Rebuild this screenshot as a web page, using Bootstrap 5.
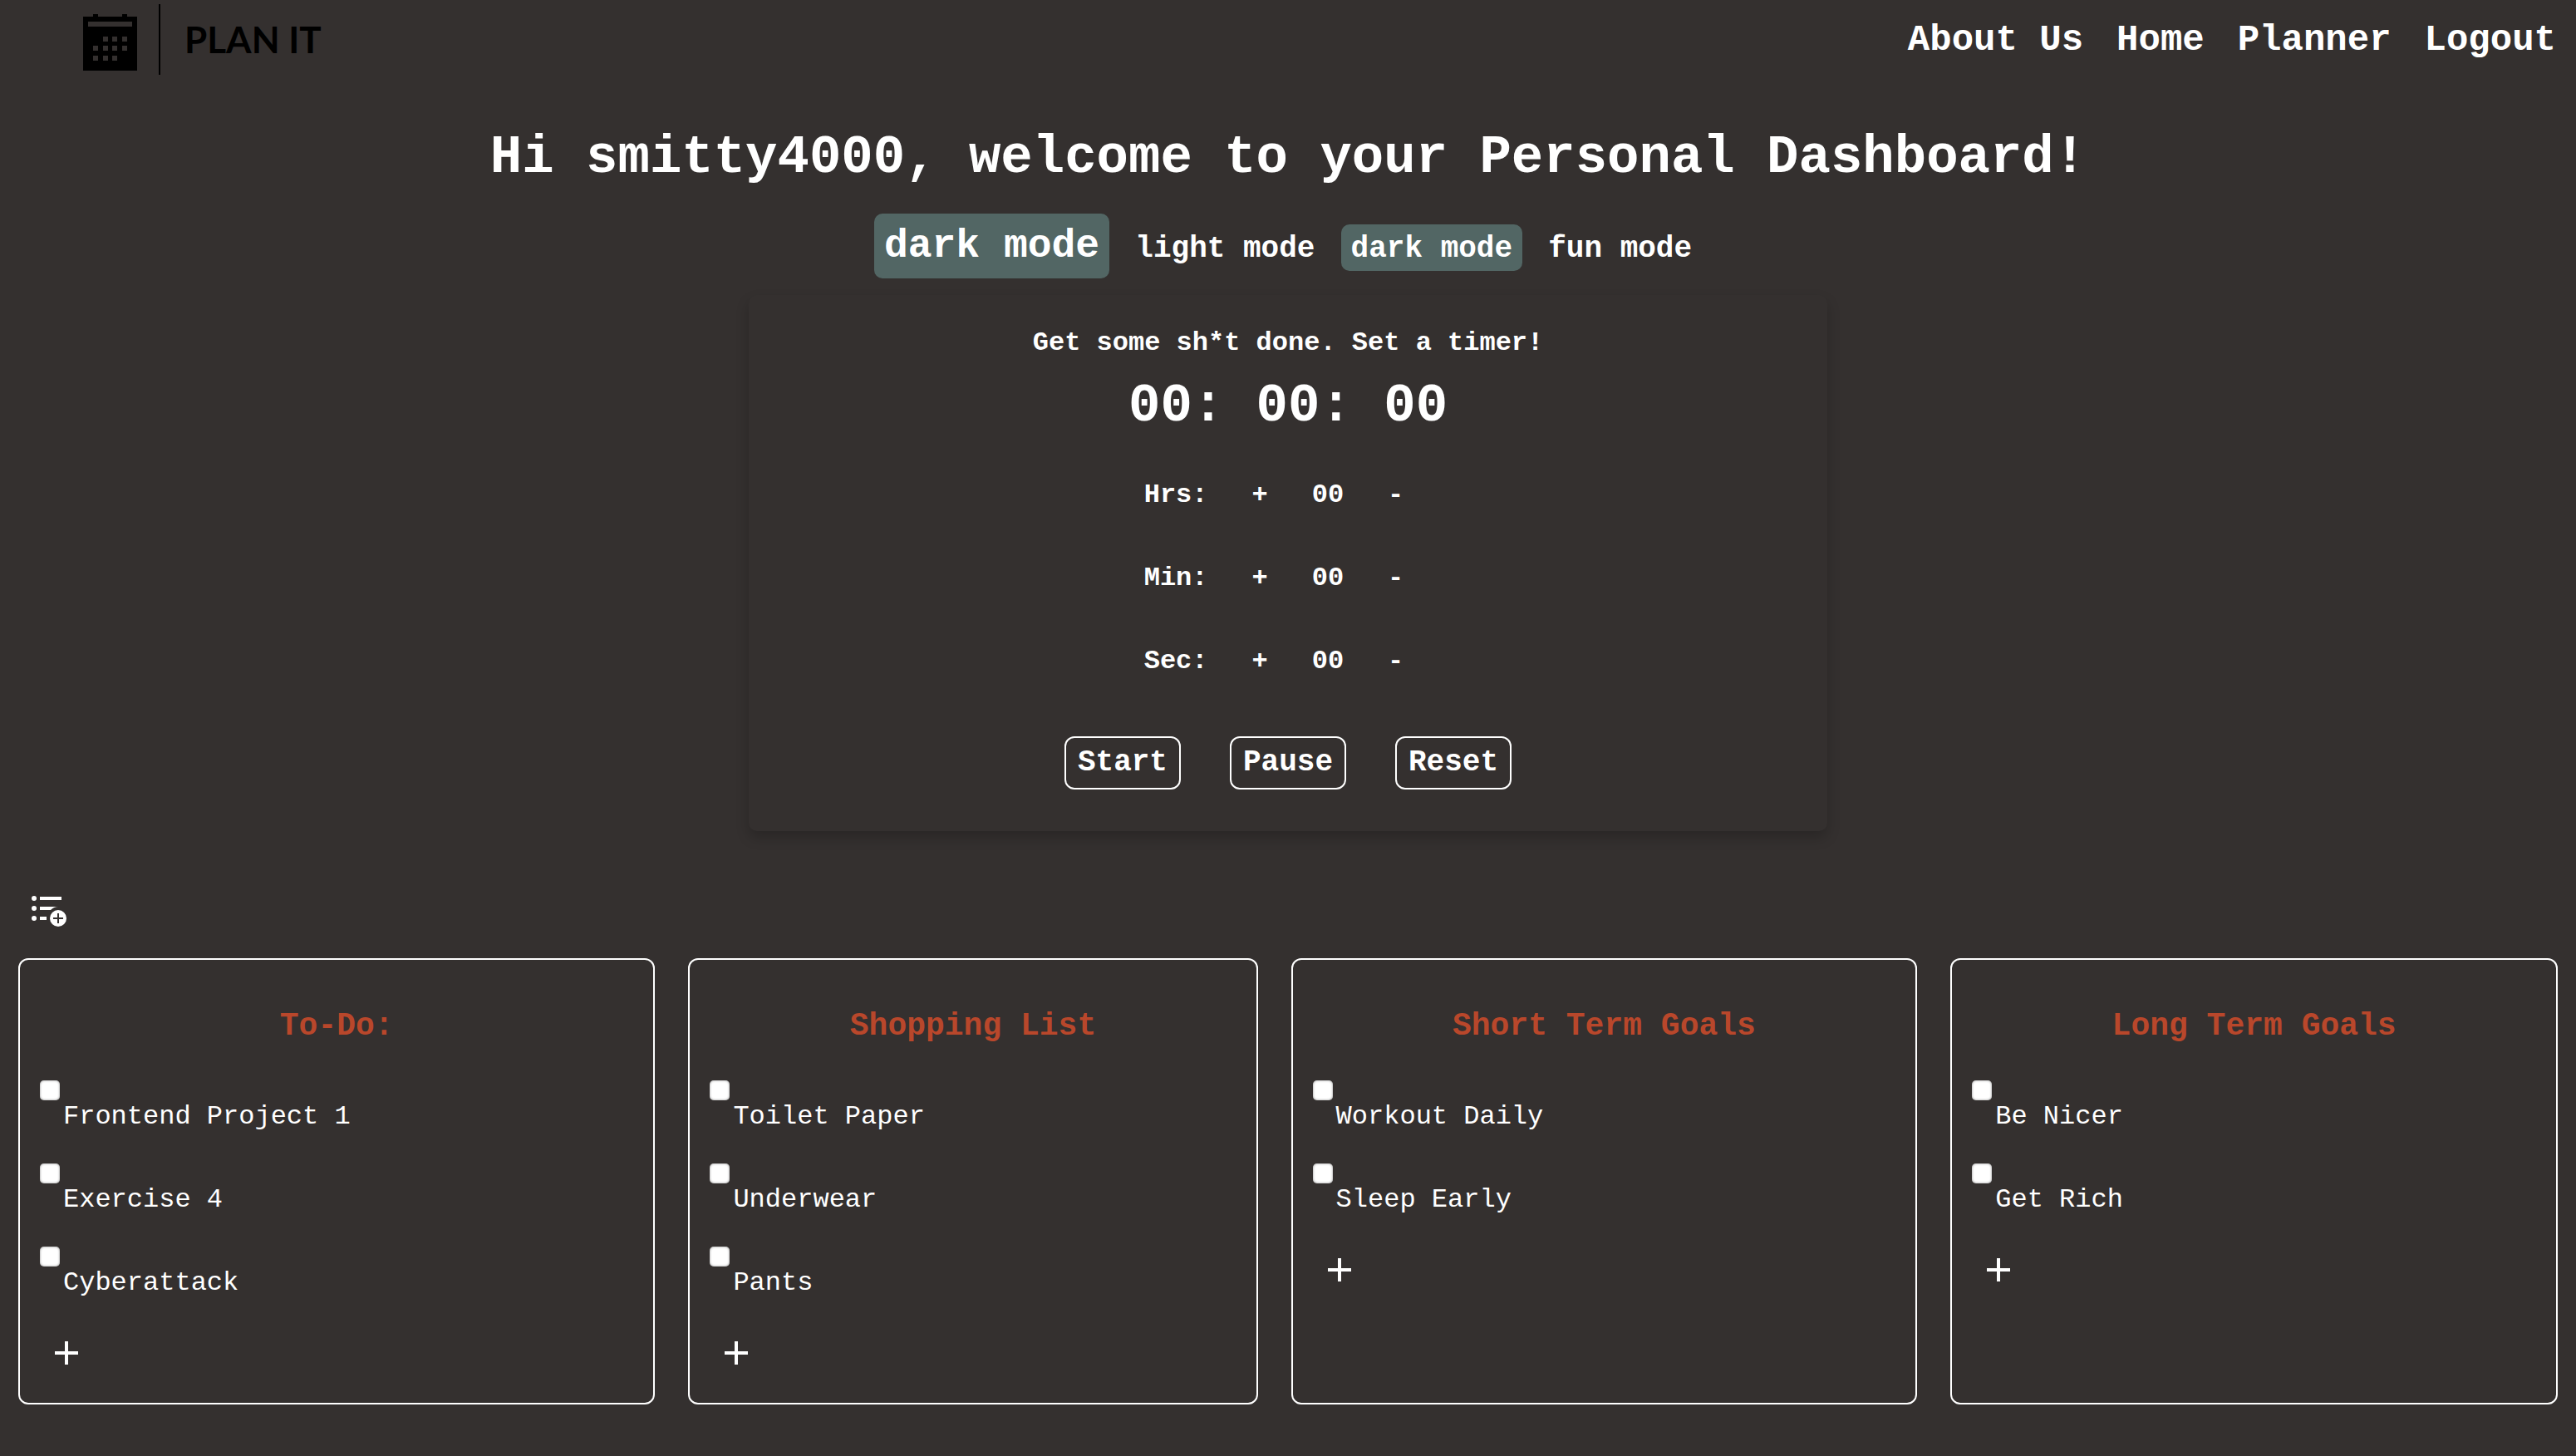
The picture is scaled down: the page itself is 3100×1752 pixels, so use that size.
<!DOCTYPE html>
<html lang="en">
<head>
<meta charset="utf-8">
<meta name="viewport" content="width=device-width, initial-scale=1">
<title>Plan It – Personal Dashboard</title>
<link rel="stylesheet" href="https://cdn.jsdelivr.net/npm/bootstrap@5.3.0/dist/css/bootstrap.min.css">
<style>
  body { background: #34302f; color: #fff; font-family: "Courier New", "Liberation Mono", monospace; font-size: 32px; line-height: 36px; }
  .site-nav { height: 110px; padding: 0 24px 0 100px; }
  .logo-art { width: 290px; height: 90px; }
  .logo-word { font-family: Lato, sans-serif; font-size: 44px; font-weight: 700; }
  .site-links { gap: 40px; font-size: 44px; line-height: 50px; padding-top: 23px; }
  .site-links a { color: #fff; text-decoration: none; }
  .greeting { font-size: 64px; line-height: 72px; margin: 44px 0 31px; }
  .mode-btn { background: none; border: 0; border-radius: 10px; color: #fff; font-size: 36px; line-height: 40px; font-weight: 700; padding: 10px 12px 6px; }
  .mode-now { display: inline-block; border-radius: 10px; font-size: 48px; line-height: 54px; padding: 12px; }
  .mode-now, .mode-btn.active { background: #526664; }
  .timer-card { width: 1298px; max-width: 100%; margin-top: 20px; padding: 40px 24px 50px; border-radius: 10px; box-shadow: 0 8px 16px rgba(0, 0, 0, .2); }
  .clock { font-size: 64px; line-height: 72px; margin: 22px 0 21px; }
  .step-row { gap: 19px; height: 100px; }
  .step-row button { background: none; border: 0; color: #fff; font-weight: 700; padding: 0 34px; }
  .timer-actions { gap: 59px; margin-top: 40px; }
  .timer-actions button { background: none; border: 2px solid #fff; border-radius: 12px; color: #fff; font-size: 36px; line-height: 40px; font-weight: 700; padding: 10px 14px; }
  .board { padding: 68px 22px 62px; }
  .icon-btn { background: none; border: 0; color: #fff; padding: 0; line-height: 0; }
  .new-list { margin: 0 0 25px 6px; }
  .lists { gap: 40px; }
  .list-panel { border: 2px solid #fff; border-radius: 12px; padding: 58px 24px 32px; }
  .list-panel h2 { color: #b9472b; font-size: 38px; line-height: 44px; font-weight: 700; margin: 0 0 43px; }
  .todo { height: 100px; }
  .todo input { appearance: none; width: 24px; height: 24px; margin: 0; border-radius: 5px; background: #fff; box-shadow: inset 0 0 3px #888; }
  .todo label { padding: 0 4px 0 28px; margin-top: 2px; }
  .add-item { margin-left: 4px; }
</style>
</head>
<body>
<nav class="site-nav d-flex justify-content-between align-items-start">
  <a href="#" aria-label="Plan It">
    <svg class="logo-art d-block" viewBox="0 0 290 90">
      <path fill-rule="evenodd" d="M0 20H12V17H18V20H47V17H53V20H65V85H0ZM6 26V32H59V26ZM24 44V50H30V44ZM35 44V50H41V44ZM47 44V50H53V44ZM12 55V61H18V55ZM24 55V61H30V55ZM35 55V61H41V55ZM47 55V61H53V55ZM12 67V73H18V67ZM24 67V73H30V67ZM35 67V73H41V67Z"/>
      <path d="M92 5V90" stroke="#000" stroke-width="2"/>
      <text class="logo-word" x="122" y="64">PLAN IT</text>
    </svg>
  </a>
  <div class="site-links d-flex fw-bold">
    <a href="#">About Us</a><a href="#">Home</a><a href="#">Planner</a><a href="#">Logout</a>
  </div>
</nav>

<main>
  <h1 class="greeting fw-bold text-center">Hi smitty4000, welcome to your Personal Dashboard!</h1>
  <div class="text-center fw-bold">
    <span class="mode-now">dark mode</span>
    <button type="button" class="mode-btn">light mode</button>
    <button type="button" class="mode-btn active">dark mode</button>
    <button type="button" class="mode-btn">fun mode</button>
  </div>

  <section class="timer-card mx-auto text-center fw-bold">
    <div>Get some sh*t done. Set a timer!</div>
    <div class="clock">00: 00: 00</div>
    <div class="step-row d-flex justify-content-center align-items-center"><span>Hrs:</span><button type="button">+</button><span>00</span><button type="button">-</button></div>
    <div class="step-row d-flex justify-content-center align-items-center"><span>Min:</span><button type="button">+</button><span>00</span><button type="button">-</button></div>
    <div class="step-row d-flex justify-content-center align-items-center"><span>Sec:</span><button type="button">+</button><span>00</span><button type="button">-</button></div>
    <div class="timer-actions d-flex justify-content-center">
      <button type="button">Start</button><button type="button">Pause</button><button type="button">Reset</button>
    </div>
  </section>

  <section class="board">
    <button type="button" class="icon-btn new-list" aria-label="Add list">
      <svg width="60" height="60" viewBox="28 1068 60 60" fill="currentColor">
        <circle cx="41" cy="1081" r="3"/><circle cx="41" cy="1093" r="3"/><circle cx="41" cy="1105" r="3"/>
        <path d="M48 1079H74V1083H48ZM48 1091H70Q65 1091 61 1095H48ZM48 1103H56V1107H48Z"/>
        <circle cx="70" cy="1105" r="10"/>
        <path d="M64 1105H76M70 1099V1111" stroke="#34302f" stroke-width="2"/>
      </svg>
    </button>
    <div class="lists d-flex">
      <article class="list-panel flex-fill">
        <h2 class="text-center">To-Do:</h2>
        <div class="todo d-flex flex-column align-items-start"><input type="checkbox" id="a1"><label for="a1">Frontend Project 1</label></div>
        <div class="todo d-flex flex-column align-items-start"><input type="checkbox" id="a2"><label for="a2">Exercise 4</label></div>
        <div class="todo d-flex flex-column align-items-start"><input type="checkbox" id="a3"><label for="a3">Cyberattack</label></div>
        <button type="button" class="icon-btn add-item" aria-label="Add item"><svg width="56" height="56"><path d="M14 28H42M28 14V42" stroke="#fff" stroke-width="4"/></svg></button>
      </article>
      <article class="list-panel flex-fill">
        <h2 class="text-center">Shopping List</h2>
        <div class="todo d-flex flex-column align-items-start"><input type="checkbox" id="b1"><label for="b1">Toilet Paper</label></div>
        <div class="todo d-flex flex-column align-items-start"><input type="checkbox" id="b2"><label for="b2">Underwear</label></div>
        <div class="todo d-flex flex-column align-items-start"><input type="checkbox" id="b3"><label for="b3">Pants</label></div>
        <button type="button" class="icon-btn add-item" aria-label="Add item"><svg width="56" height="56"><path d="M14 28H42M28 14V42" stroke="#fff" stroke-width="4"/></svg></button>
      </article>
      <article class="list-panel flex-fill">
        <h2 class="text-center">Short Term Goals</h2>
        <div class="todo d-flex flex-column align-items-start"><input type="checkbox" id="c1"><label for="c1">Workout Daily</label></div>
        <div class="todo d-flex flex-column align-items-start"><input type="checkbox" id="c2"><label for="c2">Sleep Early</label></div>
        <button type="button" class="icon-btn add-item" aria-label="Add item"><svg width="56" height="56"><path d="M14 28H42M28 14V42" stroke="#fff" stroke-width="4"/></svg></button>
      </article>
      <article class="list-panel flex-fill">
        <h2 class="text-center">Long Term Goals</h2>
        <div class="todo d-flex flex-column align-items-start"><input type="checkbox" id="d1"><label for="d1">Be Nicer</label></div>
        <div class="todo d-flex flex-column align-items-start"><input type="checkbox" id="d2"><label for="d2">Get Rich</label></div>
        <button type="button" class="icon-btn add-item" aria-label="Add item"><svg width="56" height="56"><path d="M14 28H42M28 14V42" stroke="#fff" stroke-width="4"/></svg></button>
      </article>
    </div>
  </section>
</main>
<script src="https://cdn.jsdelivr.net/npm/bootstrap@5.3.0/dist/js/bootstrap.bundle.min.js"></script>
</body>
</html>
